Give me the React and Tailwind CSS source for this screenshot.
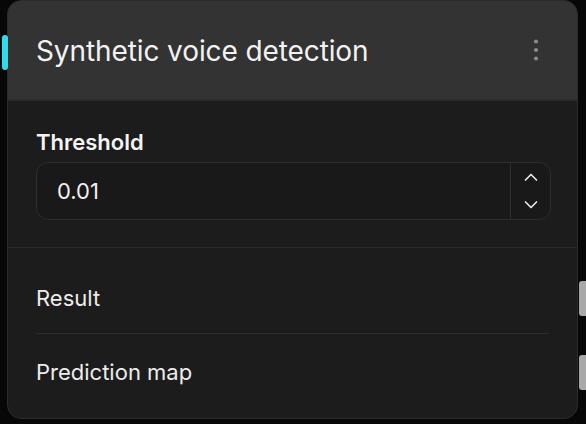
import { useState } from "react";

const Kebab = () => (
    <svg width="6" height="22" viewBox="0 0 6 22" className="text-[#8a8a8a]">
        <circle cx="3" cy="2.5" r="2.1" fill="currentColor" />
        <circle cx="3" cy="11" r="2.1" fill="currentColor" />
        <circle cx="3" cy="19.5" r="2.1" fill="currentColor" />
    </svg>
);

const Chevron = ({ up }) => (
    <svg width="16" height="10" viewBox="0 0 16 10" fill="none">
        <path
            d={up ? "M2.5 8 L8 2.5 L13.5 8" : "M2.5 2 L8 7.5 L13.5 2"}
            stroke="#e8e8e8"
            strokeWidth="1.7"
            strokeLinecap="round"
            strokeLinejoin="round"
        />
    </svg>
);

const App = () => {
    const [threshold, setThreshold] = useState(0.01);

    const step = (d) => setThreshold((t) => Math.max(0, Math.round((t + d) * 100) / 100));

    return (
        <div className="relative w-[586px] h-[424px] bg-[#070707] overflow-hidden" style={{ fontFamily: "Inter, 'Noto Sans', sans-serif" }}>
            {/* left connection handle */}
            <div className="absolute left-[2px] top-[35px] w-[6px] h-[35px] rounded-[3px] bg-[#2fdcec]" />
            {/* right handles */}
            <div className="absolute left-[579px] top-[281px] w-[7px] h-[35px] rounded-l-[3px] bg-[#a9a9a9]" />
            <div className="absolute left-[579px] top-[355px] w-[7px] h-[35px] rounded-l-[3px] bg-[#a9a9a9]" />

            <div className="ml-[7px] w-[571px] h-[419px] rounded-[14px] border border-[#2b2b2b] bg-[#1c1c1c] overflow-hidden flex flex-col">
                <div className="h-[100px] shrink-0 bg-[#333333] border-b-2 border-[#2a2a2a] flex items-center justify-between pl-[28px] pr-[38px]">
                    <h1 className="text-[28px] text-[#f2f2f2] tracking-[-0.1px] pt-[2px]">Synthetic voice detection</h1>
                    <Kebab />
                </div>

                <div className="px-[28px] pt-[29px] pb-[27px] border-b border-[#2a2a2a]">
                    <label className="block text-[22px] font-semibold text-[#f4f4f4] leading-[24px]">Threshold</label>
                    <div className="mt-[8px] h-[58px] w-[515px] rounded-[12px] border border-[#2e2e2e] bg-[#191919] flex">
                        <input
                            type="text"
                            value={threshold.toFixed(2)}
                            onChange={(e) => setThreshold(Number(e.target.value) || 0)}
                            className="flex-1 min-w-0 bg-transparent pl-[20px] text-[22px] text-[#f0f0f0] outline-none"
                        />
                        <div className="w-[40px] border-l border-[#2e2e2e] flex flex-col items-center justify-center gap-[18px]">
                            <button onClick={() => step(0.01)} className="flex"><Chevron up /></button>
                            <button onClick={() => step(-0.01)} className="flex"><Chevron /></button>
                        </div>
                    </div>
                </div>

                <div className="px-[28px]">
                    <div className="h-[86px] flex items-center pt-[16px] border-b border-[#2e2e2e] text-[22px] text-[#ececec]">Result</div>
                    <div className="h-[76px] flex items-center text-[22px] text-[#ececec]">Prediction map</div>
                </div>
            </div>
        </div>
    );
};

export default App;
